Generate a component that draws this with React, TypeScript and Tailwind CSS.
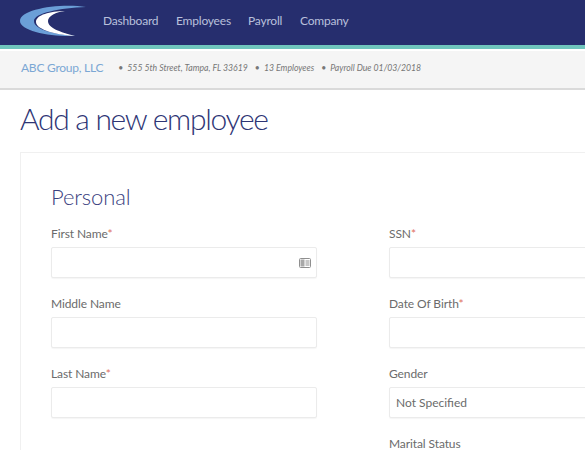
const navItems = [
  { label: "Dashboard", className: "w-[73px]" },
  { label: "Employees", className: "w-[72px]" },
  { label: "Payroll", className: "w-[52px]" },
  { label: "Company", className: "" },
];

function Logo() {
  return (
    <svg width="68" height="36" viewBox="0 0 68 36" className="shrink-0">
      <path d="M66 4C40 0 0 6 0 18C0 28 30 34 55 33C35 31 14 27 14 18C14 10 40 5 66 4Z" fill="#6b9fd8" />
      <path d="M45 8C30 8 16 12 16 19C16 27 38 32 55 33C40 29 28 25 28 18C28 13 36 9 45 8Z" fill="#ffffff" />
    </svg>
  );
}

function CardIcon() {
  return (
    <svg width="12" height="10" viewBox="0 0 12 10" className="absolute right-[5px] top-[10px]">
      <rect x="0.5" y="0.5" width="11" height="9" rx="1" fill="none" stroke="#8f8f8f" />
      <rect x="1.5" y="1.5" width="4" height="7" fill="#a8a8a8" />
      <path d="M6.5 3H10.5M6.5 5H10.5M6.5 7H10.5" stroke="#8f8f8f" />
    </svg>
  );
}

function Field({ label, required = false, value, icon = false }: { label: string; required?: boolean; value?: string; icon?: boolean }) {
  return (
    <div className="h-[70px]">
      <label className="block h-[21px] text-[12px] leading-[16px] tracking-[-0.1px] text-[#6b6b6b]">
        {label}
        {required ? <span className="text-[#e0705f]">*</span> : null}
      </label>
      <div className="relative h-[31px] rounded-[2px] border border-[#ebebeb] bg-white px-[6px] text-[12px] leading-[29px] text-[#6b6b6b] shadow-[0_1px_1px_rgba(0,0,0,0.04)]">
        {value}
        {icon ? <CardIcon /> : null}
      </div>
    </div>
  );
}

export default function App() {
  return (
    <div className="h-[450px] w-[585px] overflow-hidden bg-white font-['Lato','Open_Sans',sans-serif]">
      <header className="flex h-[45px] items-center bg-[#262e6e] pb-[4px] pl-[20px]">
        <Logo />
        <nav className="ml-[15px] flex text-[12px] tracking-[-0.2px] text-[#b9c0dc]">
          {navItems.map((item) => (
            <a key={item.label} className={item.className}>
              {item.label}
            </a>
          ))}
        </nav>
      </header>
      <div className="h-[4px] bg-[#6fc5bd]" />
      <div className="mt-[2px] flex h-[39px] items-center border-b-2 border-[#dadada] bg-[#f5f5f5] pb-[3px] pl-[21px]">
        <span className="text-[12px] tracking-[-0.25px] text-[#7ba7d4]">ABC Group, LLC</span>
        <ul className="ml-[15px] flex gap-[7px] text-[8.7px] italic text-[#777]">
          <li>• &nbsp;555 5th Street, Tampa, FL 33619</li>
          <li>• &nbsp;13 Employees</li>
          <li>• &nbsp;Payroll Due 01/03/2018</li>
        </ul>
      </div>
      <main className="pl-[20px]">
        <h1 className="mt-[10px] h-[52px] text-[30px] font-light leading-[37px] tracking-[-1.3px] text-[#2e3575]">Add a new employee</h1>
        <section className="h-[400px] w-[640px] border border-[#f0f0f0] pl-[30px]">
          <h2 className="mt-[30px] h-[43px] text-[22px] font-light leading-[28px] tracking-[-0.1px] text-[#3a4180]">Personal</h2>
          <div className="grid grid-cols-[266px_266px] gap-x-[72px]">
            <div>
              <Field label="First Name" required icon />
              <Field label="Middle Name" />
              <Field label="Last Name" required />
            </div>
            <div>
              <Field label="SSN" required />
              <Field label="Date Of Birth" required />
              <Field label="Gender" value="Not Specified" />
              <Field label="Marital Status" />
            </div>
          </div>
        </section>
      </main>
    </div>
  );
}
